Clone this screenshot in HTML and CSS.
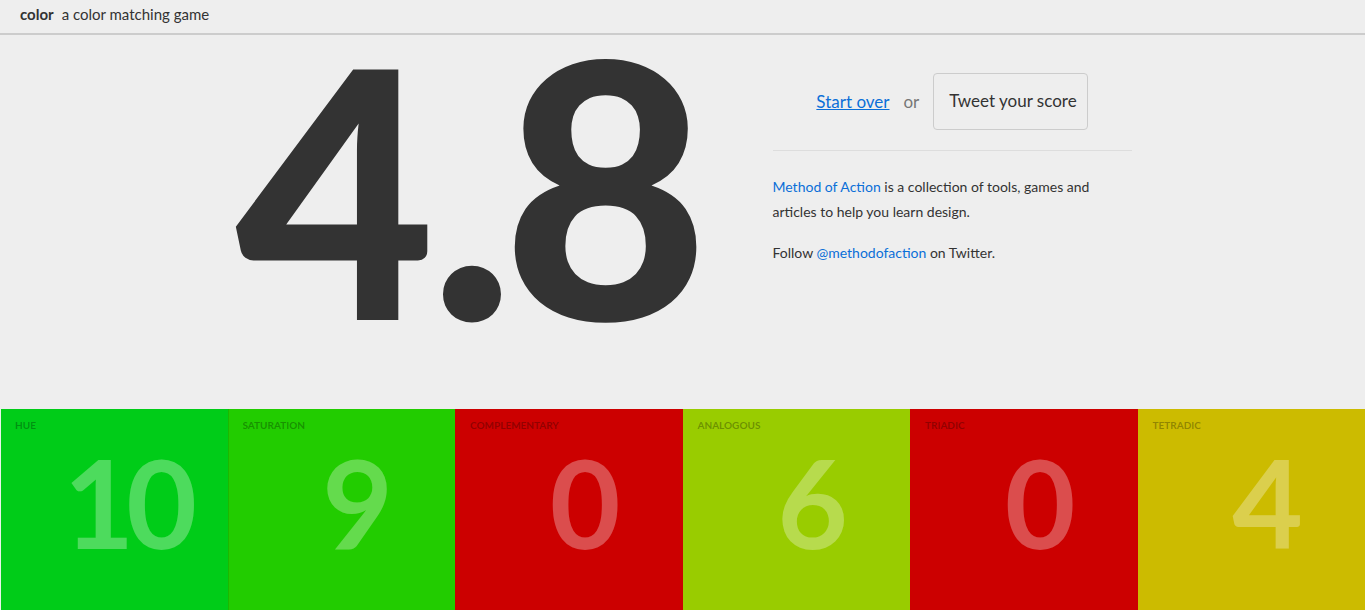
FILE: index.html
```html
<!DOCTYPE html>
<html>
<head>
<meta charset="utf-8">
<link rel="stylesheet" href="styles.css">
</head>
<body>
<header class="topbar">
  <span class="brand">color</span>
  <span class="tagline">a color matching game</span>
</header>
<main class="result">
  <div class="score"><span class="int">4</span><span class="dec">.8</span></div>
  <aside class="side">
    <div class="actions">
      <a class="restart" href="#">Start over</a>
      <span class="or">or</span>
      <button class="tweet">Tweet your score</button>
    </div>
    <hr class="rule">
    <p class="about"><a href="#">Method of Action</a> is a collection of tools, games and articles to help you learn design.</p>
    <p class="about follow">Follow <a href="#">@methodofaction</a> on Twitter.</p>
  </aside>
</main>
<section class="tiles">
  <div class="tile hue"><div class="label">Hue</div><div class="num">10</div></div>
  <div class="tile sat"><div class="label">Saturation</div><div class="num">9</div></div>
  <div class="tile comp"><div class="label">Complementary</div><div class="num">0</div></div>
  <div class="tile ana"><div class="label">Analogous</div><div class="num">6</div></div>
  <div class="tile tri"><div class="label">Triadic</div><div class="num">0</div></div>
  <div class="tile tet"><div class="label">Tetradic</div><div class="num">4</div></div>
</section>
</body>
</html>
```
FILE: styles.css
```css
html, body {
  margin: 0;
  padding: 0;
  background: #eeeeee;
  font-family: Lato, "Open Sans", sans-serif;
  color: #333333;
  overflow: hidden;
}
.topbar {
  box-sizing: border-box;
  height: 35px;
  padding: 0 20px 6px 20px;
  display: flex;
  align-items: center;
  gap: 8px;
  font-size: 15px;
  border-bottom: 2px solid #cccccc;
}
.brand {
  font-weight: 700;
}
.result {
  height: 374px;
  display: flex;
  justify-content: center;
  gap: 79px;
}
.score {
  width: 458px;
  padding-left: 2px;
  font-size: 356px;
  font-weight: 900;
  line-height: 0.8;
  padding-top: 6px;
  letter-spacing: -12px;
  white-space: nowrap;
}
.score .int {
  font-size: 345px;
  letter-spacing: -6px;
}
.side {
  width: 359px;
  padding-top: 38px;
}
.actions {
  display: flex;
  align-items: center;
  justify-content: center;
  gap: 14px;
}
.restart {
  color: #0b6fd8;
  font-size: 17px;
}
.or {
  color: #777777;
  font-size: 17px;
}
.tweet {
  font-family: Lato, sans-serif;
  font-size: 17px;
  line-height: 19px;
  color: #333333;
  background: #eeeeee;
  border: 1px solid #cccccc;
  border-radius: 4px;
  padding: 17px 10px 19px 15px;
}
.rule {
  border: 0;
  border-top: 1px solid #dddddd;
  margin: 20px 0 0 0;
}
.about {
  font-size: 14px;
  line-height: 25px;
  margin: 23px 0 0 0;
}
.about.follow {
  margin-top: 16px;
}
.about a {
  color: #0b6fd8;
  text-decoration: none;
}
.tiles {
  display: grid;
  grid-template-columns: repeat(6, 1fr);
  height: 201px;
}
.tile {
  padding: 10px 0 0 15px;
  overflow: hidden;
}
.label {
  font-size: 10px;
  font-weight: 700;
  text-transform: uppercase;
  color: rgba(0, 0, 0, 0.3);
  line-height: 12px;
}
.num {
  text-align: center;
  padding-left: 10px;
  font-size: 122px;
  font-weight: 700;
  line-height: 1;
  margin-top: 10px;
  color: rgba(255, 255, 255, 0.3);
  letter-spacing: -8px;
}
.hue { background: #00cc18; box-shadow: inset 1px 0 0 #e8f5e8; }
.sat { background: #22cc00; box-shadow: inset 1px 0 0 #1cb800; }
.comp { background: #cc0000; }
.ana { background: #99cc00; }
.tri { background: #cc0000; }
.tet { background: #ccbb00; }
```
